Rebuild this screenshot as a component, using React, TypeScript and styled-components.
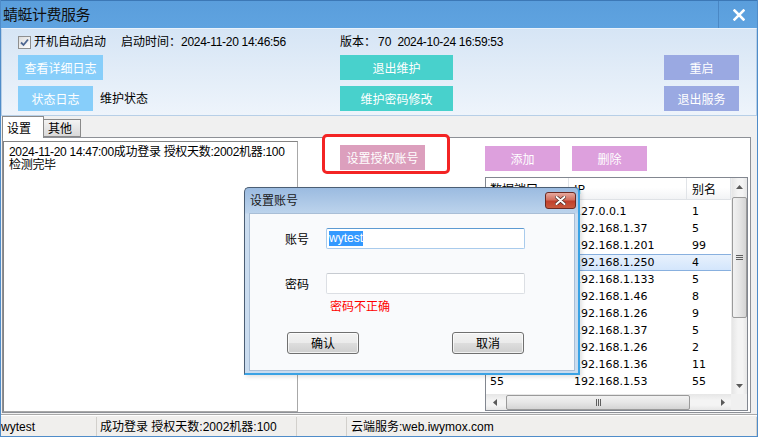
import React from "react";
import styled, { createGlobalStyle } from "styled-components";

const GlobalStyle = createGlobalStyle`
  * { box-sizing: border-box; }
  html, body { margin: 0; padding: 0; background: #ffffff; }
  body { font-family: "Liberation Sans", "Noto Sans CJK SC", sans-serif; font-size: 12px; color: #000; }
`;

const FONT = `"Liberation Sans", "Noto Sans CJK SC", sans-serif`;
const CJK = `"Noto Sans CJK SC", "Liberation Sans", sans-serif`;

const Window = styled.div`
  position: relative;
  width: 758px;
  height: 437px;
  display: flex;
  flex-direction: column;
  background: #f0f0f0;
  border: 1px solid #4f8cc9;
  border-top: none;
  overflow: hidden;
  font-family: ${FONT};
  font-size: 12px;
  line-height: 14px;
`;

const TitleBar = styled.div`
  flex: none;
  height: 28px;
  margin: 0 -1px;
  display: flex;
  align-items: stretch;
  background: linear-gradient(#5a9edc, #5fa3e0);
  border-top: 1px solid #3c78b6;
`;

const TitleText = styled.div`
  flex: 1;
  padding-left: 3px;
  font-family: ${CJK};
  font-size: 15px;
  letter-spacing: -0.5px;
  line-height: 26px;
  color: #101010;
`;

const TitleClose = styled.div`
  width: 40px;
  display: flex;
  align-items: center;
  justify-content: center;
  border-left: 1px solid rgba(40, 90, 150, 0.35);
`;

const TopPanel = styled.div`
  flex: none;
  height: 88px;
  display: flex;
  flex-direction: column;
  padding-left: 16px;
  background: linear-gradient(#d6e5f5, #eef4fb);
  border: 1px solid #b7cfe7;
  border-top-color: #eaf2fb;
`;

const PanelRow = styled.div<{ $h: number; $mt?: number }>`
  display: grid;
  grid-template-columns: 322px 324px 75px;
  height: ${(p) => p.$h}px;
  margin-top: ${(p) => p.$mt ?? 0}px;
  align-items: center;
`;

const Cell = styled.div`
  display: flex;
  align-items: center;
  height: 100%;
`;

const Text = styled.span<{ $ml?: number; $ls?: number }>`
  margin-left: ${(p) => p.$ml ?? 0}px;
  letter-spacing: ${(p) => p.$ls ?? 0}px;
  white-space: nowrap;
`;

const CheckBox = styled.div`
  width: 13px;
  height: 13px;
  border: 1px solid #8e8f8f;
  background: linear-gradient(135deg, #dcdcdc, #ffffff);
  display: flex;
  align-items: center;
  justify-content: center;
`;

const FlatButton = styled.div<{ $bg: string; $w: number }>`
  width: ${(p) => p.$w}px;
  height: 25px;
  background: ${(p) => p.$bg};
  color: #ffffff;
  display: flex;
  align-items: center;
  justify-content: center;
  font-family: ${CJK};
  font-size: 12px;
  white-space: nowrap;
`;

const TabStrip = styled.div`
  flex: none;
  height: 21px;
  display: flex;
  align-items: flex-end;
  padding-left: 1px;
  position: relative;
  z-index: 1;
`;

const Tab = styled.div<{ $active?: boolean; $w: number }>`
  width: ${(p) => p.$w}px;
  height: ${(p) => (p.$active ? 22 : 18)}px;
  margin-bottom: ${(p) => (p.$active ? -1 : 0)}px;
  margin-left: ${(p) => (p.$active ? 0 : -1)}px;
  background: ${(p) => (p.$active ? "#ffffff" : "linear-gradient(#f3f3f3, #d9d9d9)")};
  border: 1px solid #8a8a8a;
  border-bottom: ${(p) => (p.$active ? "none" : "1px solid #8a8a8a")};
  display: flex;
  align-items: center;
  padding-left: 4px;
  font-family: ${CJK};
  font-size: 12px;
`;

const TabPage = styled.div`
  flex: none;
  height: 276px;
  margin: 0 6px 0 1px;
  background: #ffffff;
  border: 1px solid #8d9096;
  display: flex;
`;

const LogBox = styled.div`
  width: 295px;
  margin-top: 3px;
  border: 1px solid #a8a8a8;
  border-top-color: #848484;
  border-left-color: #848484;
  padding: 4px 5px;
  line-height: 13px;
  letter-spacing: -0.3px;
  font-size: 12px;
`;

const RightArea = styled.div`
  flex: 1;
  display: flex;
`;

const AuthCol = styled.div`
  width: 187px;
  padding-left: 24px;
`;

const AuthFrame = styled.div`
  margin-top: -4px;
  width: 128px;
  height: 40px;
  border: 3px solid #f32424;
  border-radius: 5px;
  background: #ffffff;
  padding: 8px 0 0 15px;
`;

const ListCol = styled.div`
  width: 263px;
  display: flex;
  flex-direction: column;
  padding-top: 8px;
`;

const ButtonsRow = styled.div`
  display: flex;
  gap: 12px;
`;

const ListView = styled.div`
  flex: 1;
  margin-top: 6px;
  margin-bottom: 1px;
  border: 1px solid #828790;
  display: grid;
  grid-template-columns: 1fr 16px;
  grid-template-rows: 1fr 16px;
  background: #ffffff;
  overflow: hidden;
`;

const TableArea = styled.div`
  display: flex;
  flex-direction: column;
  overflow: hidden;
`;

const HeaderRow = styled.div`
  flex: none;
  height: 22px;
  display: grid;
  grid-template-columns: 83px 118px 1fr;
  background: linear-gradient(#ffffff 0%, #ffffff 45%, #f2f3f5 100%);
  border-bottom: 1px solid #dfe2e6;
`;

const HeaderCell = styled.div<{ $pl?: number }>`
  display: flex;
  align-items: center;
  padding-left: ${(p) => p.$pl ?? 5}px;
  border-right: 1px solid #e1e4e8;
  font-family: ${CJK};
  font-size: 12px;
`;

const Rows = styled.div`
  padding-top: 3px;
`;

const DataRow = styled.div<{ $sel?: boolean }>`
  height: 17px;
  display: grid;
  grid-template-columns: 83px 118px 1fr;
  align-items: center;
  font-family: "DejaVu Sans", sans-serif;
  font-size: 11px;
  background: ${(p) => (p.$sel ? "linear-gradient(#e9f2fd, #d2e5fc)" : "transparent")};
  box-shadow: ${(p) => (p.$sel ? "inset 0 1px 0 #88b0df, inset 0 -1px 0 #88b0df" : "none")};
`;

const DataCell = styled.div<{ $pl?: number }>`
  padding-left: ${(p) => p.$pl ?? 5}px;
  white-space: nowrap;
`;

const VScroll = styled.div`
  display: flex;
  flex-direction: column;
  align-items: center;
  background: linear-gradient(90deg, #e6e6e6, #f4f4f4 40%, #f4f4f4 70%, #e6e6e6);
  border-left: 1px solid #ededed;
`;

const HScroll = styled.div`
  display: flex;
  align-items: center;
  background: linear-gradient(#e6e6e6, #f4f4f4 40%, #f4f4f4 70%, #e6e6e6);
`;

const ArrowBox = styled.div<{ $w: number; $h: number }>`
  width: ${(p) => p.$w}px;
  height: ${(p) => p.$h}px;
  flex: none;
  display: flex;
  align-items: center;
  justify-content: center;
`;

const VThumb = styled.div`
  margin-top: 2px;
  width: 15px;
  height: 121px;
  border: 1px solid #9a9a9a;
  border-radius: 2px;
  background: linear-gradient(90deg, #f2f2f2, #e6e6e6 50%, #d4d4d4);
  display: flex;
  align-items: center;
  justify-content: center;
`;

const HThumb = styled.div`
  margin-left: 3px;
  width: 184px;
  height: 15px;
  border: 1px solid #9a9a9a;
  border-radius: 2px;
  background: linear-gradient(#f2f2f2, #e6e6e6 50%, #d4d4d4);
  display: flex;
  align-items: center;
  justify-content: center;
`;

const Spacer = styled.div`
  flex: 1;
`;

const Corner = styled.div`
  background: #f0f0f0;
`;

const StatusBar = styled.div`
  flex: 1;
  display: flex;
  margin-top: 1px;
  border-top: 1px solid #a9a9a9;
  box-shadow: inset 0 1px 0 #ffffff;
  background: #f0efed;
  padding-top: 2px;
`;

const StatusCell = styled.div<{ $w?: number; $pl: number }>`
  ${(p) => (p.$w ? `width: ${p.$w}px;` : "flex: 1;")}
  padding-left: ${(p) => p.$pl}px;
  display: flex;
  align-items: center;
  border-right: 1px solid #d2d0cc;
  white-space: nowrap;
  font-size: 12px;
`;

const Dialog = styled.div`
  position: absolute;
  left: 243px;
  top: 187px;
  width: 336px;
  height: 188px;
  border: 1px solid #4b5e74;
  border-right: 2px solid #3aa2e4;
  border-bottom: 2px solid #3aa2e4;
  border-radius: 5px 5px 0 0;
  background: linear-gradient(#9bbbe0 0px, #bcd3ec 25px, #cadcef 26px, #cadcef 100%);
  display: flex;
  flex-direction: column;
  box-shadow: 2px 2px 4px rgba(0, 0, 0, 0.12);
  z-index: 5;
`;

const DialogTitle = styled.div`
  height: 25px;
  flex: none;
  display: flex;
  align-items: flex-start;
  padding: 0 2px 0 5px;
`;

const DialogTitleText = styled.div`
  flex: 1;
  font-family: ${CJK};
  font-size: 12px;
  line-height: 24px;
  color: #1a1a1a;
`;

const DialogClose = styled.div`
  margin-top: 4px;
  width: 31px;
  height: 17px;
  border: 1px solid #6b2a22;
  border-radius: 3px;
  background: linear-gradient(#e6a99f 0%, #d2705f 45%, #c0402c 55%, #c85a3e 100%);
  display: flex;
  align-items: center;
  justify-content: center;
`;

const DialogBody = styled.div`
  flex: 1;
  margin: 0 3px 2px 4px;
  background: #f9fafc;
  border: 1px solid #a9bed6;
  padding: 14px 0 0 35px;
  display: flex;
  flex-direction: column;
`;

const FieldRow = styled.div<{ $mb?: number }>`
  display: flex;
  align-items: center;
  height: 21px;
  margin-bottom: ${(p) => p.$mb ?? 0}px;
`;

const FieldLabel = styled.div`
  width: 41px;
  font-family: ${CJK};
  font-size: 12px;
`;

const TextInput = styled.div<{ $focus?: boolean }>`
  width: 199px;
  height: 21px;
  background: #ffffff;
  border: 1px solid ${(p) => (p.$focus ? "#a9cbec" : "#dcdfe4")};
  border-top-color: ${(p) => (p.$focus ? "#5d9ad2" : "#c7cbd1")};
  border-radius: 2px;
  display: flex;
  align-items: center;
  padding-left: 2px;
`;

const Selected = styled.span`
  background: #3399ff;
  color: #ffffff;
  line-height: 15px;
`;

const ErrorText = styled.div`
  margin: 2px 0 0 45px;
  height: 20px;
  line-height: 20px;
  color: #ff0000;
  font-family: ${CJK};
  font-size: 12px;
`;

const DialogButtons = styled.div`
  margin: 16px 0 0 2px;
  display: flex;
  gap: 93px;
`;

const SysButton = styled.div`
  width: 72px;
  height: 22px;
  border: 1px solid #707070;
  border-radius: 3px;
  background: linear-gradient(#f3f3f3 0%, #ebebeb 48%, #dddddd 52%, #cfcfcf 100%);
  box-shadow: inset 0 0 0 1px rgba(255, 255, 255, 0.7);
  display: flex;
  align-items: center;
  justify-content: center;
  font-family: ${CJK};
  font-size: 12px;
`;

const rows: [string, string, string, boolean?][] = [
  ["1", "127.0.0.1", "1"],
  ["5", "192.168.1.37", "5"],
  ["99", "192.168.1.201", "99"],
  ["4", "192.168.1.250", "4", true],
  ["5", "192.168.1.133", "5"],
  ["8", "192.168.1.46", "8"],
  ["9", "192.168.1.26", "9"],
  ["5", "192.168.1.37", "5"],
  ["2", "192.168.1.26", "2"],
  ["11", "192.168.1.36", "11"],
  ["55", "192.168.1.53", "55"],
];

const Tri = ({ dir }: { dir: "up" | "down" | "left" | "right" }) => {
  const pts = {
    up: "0,4 3.5,0 7,4",
    down: "0,0 3.5,4 7,0",
    left: "4,0 0,3.5 4,7",
    right: "0,0 4,3.5 0,7",
  }[dir];
  const vertical = dir === "up" || dir === "down";
  return (
    <svg width={vertical ? 7 : 4} height={vertical ? 4 : 7} viewBox={vertical ? "0 0 7 4" : "0 0 4 7"}>
      <polygon points={pts} fill="#5a5a5a" />
    </svg>
  );
};

export default function App() {
  return (
    <>
      <GlobalStyle />
      <Window>
        <TitleBar>
          <TitleText>蜻蜓计费服务</TitleText>
          <TitleClose>
            <svg width="12" height="12" viewBox="0 0 12 12">
              <path d="M1.5 1.5 L10.5 10.5 M10.5 1.5 L1.5 10.5" stroke="#ffffff" strokeWidth="2.5" strokeLinecap="square" />
            </svg>
          </TitleClose>
        </TitleBar>

        <TopPanel>
          <PanelRow $h={26}>
            <Cell>
              <CheckBox>
                <svg width="9" height="9" viewBox="0 0 9 9">
                  <path d="M1 4.5 L3.5 7 L8 1.5" stroke="#4e6690" strokeWidth="1.8" fill="none" />
                </svg>
              </CheckBox>
              <Text $ml={3}>开机自动启动</Text>
              <Text $ml={15}>启动时间：</Text>
              <Text $ls={-0.3}>2024-11-20 14:46:56</Text>
            </Cell>
            <Cell>
              <Text>版本：</Text>
              <Text $ml={2}>70</Text>
              <Text $ml={6} $ls={-0.3}>2024-10-24 16:59:53</Text>
            </Cell>
            <Cell />
          </PanelRow>
          <PanelRow $h={25}>
            <Cell>
              <FlatButton $bg="#87cefa" $w={85}>查看详细日志</FlatButton>
            </Cell>
            <Cell>
              <FlatButton $bg="#48d1cc" $w={113}>退出维护</FlatButton>
            </Cell>
            <Cell>
              <FlatButton $bg="#9aa9e2" $w={75}>重启</FlatButton>
            </Cell>
          </PanelRow>
          <PanelRow $h={25} $mt={6}>
            <Cell>
              <FlatButton $bg="#87cefa" $w={75}>状态日志</FlatButton>
              <Text $ml={7}>维护状态</Text>
            </Cell>
            <Cell>
              <FlatButton $bg="#48d1cc" $w={113}>维护密码修改</FlatButton>
            </Cell>
            <Cell>
              <FlatButton $bg="#9aa9e2" $w={75}>退出服务</FlatButton>
            </Cell>
          </PanelRow>
        </TopPanel>

        <TabStrip>
          <Tab $active $w={42}>设置</Tab>
          <Tab $w={38}>其他</Tab>
        </TabStrip>

        <TabPage>
          <LogBox>
            2024-11-20 14:47:00成功登录 授权天数:2002机器:100
            <br />
            检测完毕
          </LogBox>
          <RightArea>
            <AuthCol>
              <AuthFrame>
                <FlatButton $bg="#dc9fbd" $w={85}>设置授权账号</FlatButton>
              </AuthFrame>
            </AuthCol>
            <ListCol>
              <ButtonsRow>
                <FlatButton $bg="#dda0dd" $w={75}>添加</FlatButton>
                <FlatButton $bg="#dda0dd" $w={75}>删除</FlatButton>
              </ButtonsRow>
              <ListView>
                <TableArea>
                  <HeaderRow>
                    <HeaderCell $pl={4}>数据端口</HeaderCell>
                    <HeaderCell>IP</HeaderCell>
                    <HeaderCell>别名</HeaderCell>
                  </HeaderRow>
                  <Rows>
                    {rows.map(([port, ip, alias, sel], i) => (
                      <DataRow key={i} $sel={sel}>
                        <DataCell $pl={4}>{port}</DataCell>
                        <DataCell>{ip}</DataCell>
                        <DataCell>{alias}</DataCell>
                      </DataRow>
                    ))}
                  </Rows>
                </TableArea>
                <VScroll>
                  <ArrowBox $w={16} $h={17}>
                    <Tri dir="up" />
                  </ArrowBox>
                  <VThumb>
                    <svg width="7" height="7" viewBox="0 0 7 7">
                      <path d="M0 1.5 H7 M0 3.5 H7 M0 5.5 H7" stroke="#5e5e5e" strokeWidth="1" />
                    </svg>
                  </VThumb>
                  <Spacer />
                  <ArrowBox $w={16} $h={17}>
                    <Tri dir="down" />
                  </ArrowBox>
                </VScroll>
                <HScroll>
                  <ArrowBox $w={17} $h={16}>
                    <Tri dir="left" />
                  </ArrowBox>
                  <HThumb>
                    <svg width="7" height="7" viewBox="0 0 7 7">
                      <path d="M1.5 0 V7 M3.5 0 V7 M5.5 0 V7" stroke="#5e5e5e" strokeWidth="1" />
                    </svg>
                  </HThumb>
                  <Spacer />
                  <ArrowBox $w={17} $h={16}>
                    <Tri dir="right" />
                  </ArrowBox>
                </HScroll>
                <Corner />
              </ListView>
            </ListCol>
          </RightArea>
        </TabPage>

        <StatusBar>
          <StatusCell $w={96} $pl={0}>wytest</StatusCell>
          <StatusCell $w={200} $pl={3}>成功登录 授权天数:2002机器:100</StatusCell>
          <StatusCell $w={50} $pl={0} />
          <StatusCell $pl={4}>云端服务:web.iwymox.com</StatusCell>
        </StatusBar>

        <Dialog>
          <DialogTitle>
            <DialogTitleText>设置账号</DialogTitleText>
            <DialogClose>
              <svg width="11" height="9" viewBox="0 0 11 9">
                <path d="M1.5 1 L9.5 8 M9.5 1 L1.5 8" stroke="#4a2a24" strokeWidth="3.4" strokeLinecap="round" />
                <path d="M1.5 1 L9.5 8 M9.5 1 L1.5 8" stroke="#ffffff" strokeWidth="2" strokeLinecap="round" />
              </svg>
            </DialogClose>
          </DialogTitle>
          <DialogBody>
            <FieldRow $mb={24}>
              <FieldLabel>账号</FieldLabel>
              <TextInput $focus>
                <Selected>wytest</Selected>
              </TextInput>
            </FieldRow>
            <FieldRow>
              <FieldLabel>密码</FieldLabel>
              <TextInput />
            </FieldRow>
            <ErrorText>密码不正确</ErrorText>
            <DialogButtons>
              <SysButton>确认</SysButton>
              <SysButton>取消</SysButton>
            </DialogButtons>
          </DialogBody>
        </Dialog>
      </Window>
    </>
  );
}
